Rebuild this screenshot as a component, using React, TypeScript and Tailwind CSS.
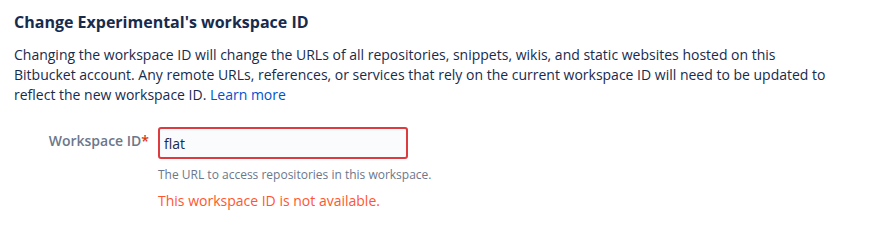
import React from 'react';

const font = { fontFamily: '"Open Sans", "Noto Sans", sans-serif' };

const App = () => {
  return (
    <div className="w-[874px] h-[212px] bg-white text-[#172B4D] overflow-hidden" style={font}>
      <div className="pl-[14px] pt-[12px] w-[830px]">
        <h2 className="text-[16px] leading-[20px] font-bold">Change Experimental's workspace ID</h2>
        <p className="mt-[13px] text-[14px] leading-[20px]">
          Changing the workspace ID will change the URLs of all repositories, snippets, wikis, and static
          websites hosted on this Bitbucket account. Any remote URLs, references, or services that rely on
          the current workspace ID will need to be updated to reflect the new workspace ID.{' '}
          <a href="#" className="text-[#0052CC]">
            Learn more
          </a>
        </p>
      </div>

      <div className="mt-[22px] flex">
        <label className="w-[157px] pr-[8px] pt-[4px] text-right text-[14px] leading-[20px] font-semibold text-[#6B778C]">
          Workspace ID<span className="text-[#DE350B]">*</span>
        </label>
        <div className="flex flex-col ml-[1px]">
          <input
            defaultValue="flat"
            className="w-[250px] h-[32px] px-[4px] rounded-[3px] border-2 border-[#DC3B3F] bg-[#FAFBFC] text-[14px] text-[#172B4D] outline-none"
          />
          <div className="mt-[8px] text-[12px] leading-[16px] text-[#6B778C]">
            The URL to access repositories in this workspace.
          </div>
          <div className="mt-[8px] text-[14px] leading-[20px] text-[#FF5630]">
            This workspace ID is not available.
          </div>
        </div>
      </div>
    </div>
  );
};

export default App;
